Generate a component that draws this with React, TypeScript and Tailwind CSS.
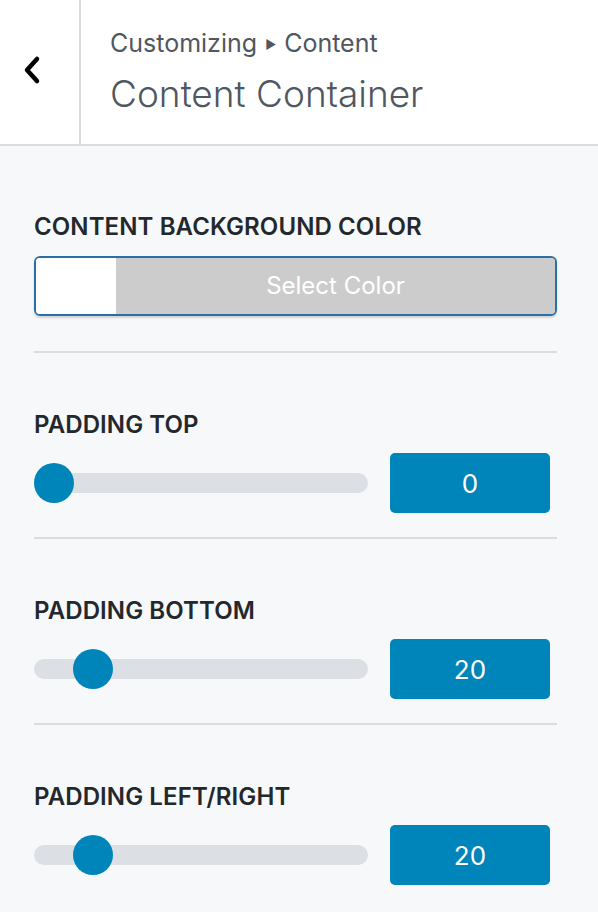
import React from 'react'

const sliders = [
  { label: 'PADDING TOP', value: 0, pct: 0 },
  { label: 'PADDING BOTTOM', value: 20, pct: 20 },
  { label: 'PADDING LEFT/RIGHT', value: 20, pct: 20 },
]

function Slider({ label, value, pct }: { label: string; value: number; pct: number }) {
  return (
    <div className="border-t-2 border-[#dcdcde] pt-[55px] pb-[24px]">
      <div className="text-[24px] font-semibold leading-[34px] text-[#23282d] tracking-[0.1px]">{label}</div>
      <div className="mt-[11px] flex items-center">
        <div className="relative h-5 w-[334px] rounded-full bg-[#dcdfe3]">
          <div
            className="absolute top-1/2 h-10 w-10 -translate-y-1/2 rounded-full bg-[#0085ba]"
            style={{ left: `${pct * 1.95}px` }}
          />
        </div>
        <div className="ml-[22px] flex h-[60px] w-[160px] items-center justify-center rounded-[5px] bg-[#0085ba] text-[26px] text-white">
          {value}
        </div>
      </div>
    </div>
  )
}

export default function App() {
  return (
    <div className="min-h-[912px] w-[598px] bg-[#f7f8f9] font-['Inter','Roboto',sans-serif]">
      {/* Header */}
      <div className="flex h-[146px] border-b-2 border-[#dcdcde] bg-white">
        <div className="flex w-[81px] items-center justify-center border-r-2 border-[#dcdcde]">
          <svg width="20" height="30" viewBox="0 0 20 30" className="-ml-[14px] -mt-[4px]">
            <polyline points="14,4 4,15 14,26" fill="none" stroke="#000" strokeWidth="4.5" strokeLinecap="round" strokeLinejoin="round" />
          </svg>
        </div>
        <div className="flex flex-col pl-[29px] pt-[26px]">
          <div className="text-[25px] leading-[34px] text-[#50575e]">
            Customizing <span className="mx-[1px] text-[12px] align-middle">▶</span> Content
          </div>
          <div className="mt-[9px] text-[37px] font-light leading-[46px] text-[#50575e]">Content Container</div>
        </div>
      </div>

      {/* Controls */}
      <div className="pl-[34px] pr-[41px]">
        <div className="pt-[64px] pb-[35px]">
          <div className="text-[24px] font-semibold leading-[34px] text-[#23282d] tracking-[0.1px]">
            CONTENT BACKGROUND COLOR
          </div>
          <div className="mt-[12px] flex h-[60px] overflow-hidden rounded-[6px] border-2 border-[#2c6ea6] shadow-[0_2px_2px_rgba(0,0,0,0.15)]">
            <div className="w-[80px] bg-white" />
            <div className="flex flex-1 items-center justify-center bg-[#cccccc] text-[24px] text-white">
              Select Color
            </div>
          </div>
        </div>
        {sliders.map((s) => (
          <Slider key={s.label} {...s} />
        ))}
      </div>
    </div>
  )
}
